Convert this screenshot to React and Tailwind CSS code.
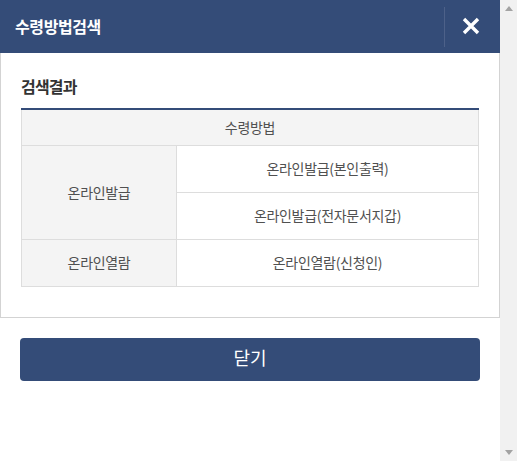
import React from "react";

const font = { fontFamily: '"Noto Sans CJK KR", "Noto Sans", sans-serif' };

export default function App() {
  return (
    <div className="flex w-[517px] h-[461px] bg-white overflow-hidden" style={font}>
      <div className="w-[500px] flex flex-col">
        <div className="h-[53px] bg-[#344c78] flex items-center">
          <div className="flex-1 pl-[15px] text-white text-[16px] font-bold tracking-[-0.4px] leading-none pb-[1px]">
            수령방법검색
          </div>
          <div className="h-[40px] w-px bg-[#4d6189]" />
          <div className="w-[55px] h-full flex items-center justify-center pr-[4px] pb-[1px]">
            <svg width="18" height="18" viewBox="0 0 18 18">
              <path d="M2 2 L16 16 M16 2 L2 16" stroke="#fff" strokeWidth="3.4" strokeLinecap="butt" />
            </svg>
          </div>
        </div>
        <div className="border-x border-b border-[#d3d3d3] px-[20px] pt-[23px] pb-[30px]">
          <div className="text-[16px] font-bold text-[#333] tracking-[-0.8px] leading-[20px] mb-[12px]">
            검색결과
          </div>
          <table className="w-full border-collapse border-t-2 border-t-[#344c78] text-[14px] text-[#505050] tracking-[-0.3px]">
            <thead>
              <tr className="h-[36px]">
                <th colSpan={2} className="bg-[#f4f4f4] border border-[#dddddd] border-t-0 font-normal">
                  수령방법
                </th>
              </tr>
            </thead>
            <tbody>
              <tr className="h-[47px]">
                <td rowSpan={2} className="w-[155px] bg-[#f4f4f4] border border-[#dddddd] text-center">
                  온라인발급
                </td>
                <td className="border border-[#dddddd] text-center">온라인발급(본인출력)</td>
              </tr>
              <tr className="h-[47px]">
                <td className="border border-[#dddddd] text-center">온라인발급(전자문서지갑)</td>
              </tr>
              <tr className="h-[47px]">
                <td className="bg-[#f4f4f4] border border-[#dddddd] text-center">온라인열람</td>
                <td className="border border-[#dddddd] text-center">온라인열람(신청인)</td>
              </tr>
            </tbody>
          </table>
        </div>
        <div className="px-[20px] pt-[20px]">
          <button className="w-full h-[43px] rounded-[4px] bg-[#344c78] text-white text-[18px] flex items-center justify-center pb-[3px]">
            닫기
          </button>
        </div>
      </div>
      <div className="w-[17px] bg-[#f1f1f1] flex flex-col justify-between items-center py-[6px]">
        <svg width="8" height="5" viewBox="0 0 8 5">
          <path d="M0 5 L4 0 L8 5 Z" fill="#a3a3a3" />
        </svg>
        <svg width="8" height="5" viewBox="0 0 8 5">
          <path d="M0 0 L8 0 L4 5 Z" fill="#a3a3a3" />
        </svg>
      </div>
    </div>
  );
}
